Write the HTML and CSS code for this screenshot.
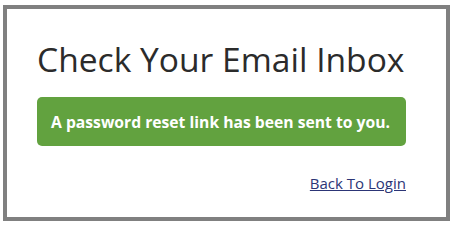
FILE: index.html
```html
<!DOCTYPE html>
<html lang="en">

<head>
    <meta charset="UTF-8">
    <meta name="viewport" content="width=device-width, initial-scale=1.0">
    <title>Check Your Email Inbox</title>
    <link rel="stylesheet" href="styles.css">
</head>

<body>
    <div class="panel">
        <h1>Check Your Email Inbox</h1>
        <div class="notice">A password reset link has been sent to you.</div>
        <div class="links">
            <a href="#" class="back">Back To Login</a>
        </div>
    </div>
</body>

</html>
```

FILE: styles.css
```css
* {
    margin: 0;
    padding: 0;
    box-sizing: border-box;
    font-family: "Open Sans", Arial, sans-serif;
}

body {
    background: #fff;
    padding: 5px 6px 0 3px;
}

.panel {
    width: 447px;
    height: 216px;
    border: 4px solid #808080;
    background: #fff;
    padding: 31px 40px 0 30px;
}

h1 {
    font-size: 33.6px;
    font-weight: 400;
    line-height: 38px;
    color: #2b2b2b;
    white-space: nowrap;
    margin-bottom: 19px;
}

.notice {
    background: #62a23f;
    color: #fff;
    font-size: 15.7px;
    font-weight: 700;
    line-height: 20px;
    padding: 15px 14px 14px;
    border-radius: 5px;
    white-space: nowrap;
}

.links {
    text-align: right;
    margin-top: 26px;
}

.back {
    font-size: 15px;
    color: #2c3576;
    text-decoration: underline;
}
```
